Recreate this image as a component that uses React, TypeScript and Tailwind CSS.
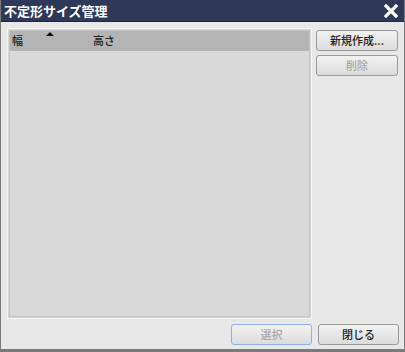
import React from 'react'

const font = { fontFamily: '"Noto Sans CJK JP", "Liberation Sans", sans-serif' }

const Btn = ({ label, disabled, focus, className }: any) => (
  <button
    className={`h-[21px] rounded-[3px] border text-[11px] leading-none font-medium bg-gradient-to-b from-[#f2f2f2] to-[#dcdcdc] ${
      focus ? 'border-[#8fb0e8]' : 'border-[#9a9a9a]'
    } ${disabled ? 'text-[#a8a8a8]' : 'text-[#222]'} ${className}`}
  >
    {label}
  </button>
)

export default function App() {
  return (
    <div style={font} className="w-[405px] h-[352px] flex flex-col bg-[#e8e8e8] border-x border-b-[3px] border-[#7a7a7a] overflow-hidden">
      <div className="h-[22px] shrink-0 bg-[#2e3858] flex items-center justify-between pl-[3px] pr-[6px] border-b border-[#1e2740]">
        <span className="text-white font-bold text-[13px] leading-none">不定形サイズ管理</span>
        <svg width="14" height="14" viewBox="0 0 14 14">
          <path d="M2 2 L12 12 M12 2 L2 12" stroke="#fff" strokeWidth="3.2" strokeLinecap="square" />
        </svg>
      </div>
      <div className="flex flex-1 pt-[6px] pl-[6px] pr-[6px]">
        <div className="w-[306px] h-[291px] border border-[#f4f4f4] bg-[#d6d6d6] p-px">
          <div className="h-full border border-[#c4c4c4] bg-[#d9d9d9] flex flex-col">
            <div className="h-[20px] bg-[#b4b4b4] relative flex items-center text-[11px] font-medium text-[#222] pb-px">
              <span className="ml-[2px] w-[81px]">幅</span>
              <span>高さ</span>
              <span className="absolute left-[36px] top-[1px] w-0 h-0 border-x-[4px] border-x-transparent border-b-[4px] border-b-[#111]" />
            </div>
          </div>
        </div>
        <div className="flex flex-col gap-[4px] ml-[4px] pt-[2px]">
          <Btn label="新規作成..." className="w-[82px]" />
          <Btn label="削除" disabled className="w-[82px]" />
        </div>
      </div>
      <div className="flex justify-end gap-[6px] pr-[5px] pb-[4px]">
        <Btn label="選択" disabled focus className="w-[81px] h-[20px]" />
        <Btn label="閉じる" className="w-[81px] h-[20px]" />
      </div>
    </div>
  )
}
